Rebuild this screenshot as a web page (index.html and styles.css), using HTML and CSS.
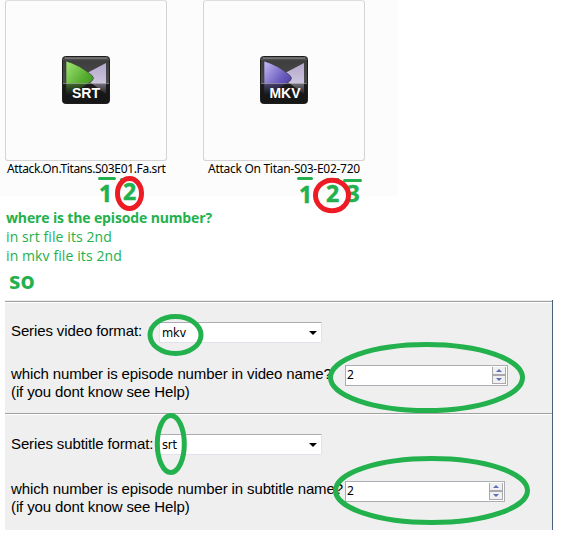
FILE: index.html
```html
<!DOCTYPE html>
<html lang="en">
<head>
<meta charset="utf-8">
<title>Episode number help</title>
<link rel="stylesheet" href="styles.css">
</head>
<body>
<main class="page">
  <section class="files">
    <figure class="file">
      <div class="thumb">
        <svg class="icon" viewBox="0 0 48 48">
          <defs>
            <linearGradient id="tile" x1="0" y1="0" x2="0" y2="1"><stop offset="0" stop-color="#626262"/><stop offset=".1" stop-color="#3e3e3e"/><stop offset=".55" stop-color="#4b4b4b"/><stop offset=".6" stop-color="#202020"/><stop offset="1" stop-color="#141414"/></linearGradient>
            <linearGradient id="green" x1="0" y1="0" x2="1" y2="1"><stop offset="0" stop-color="#a4e477"/><stop offset=".55" stop-color="#57ad30"/><stop offset="1" stop-color="#2c8512"/></linearGradient>
            <linearGradient id="violet" x1="0" y1="0" x2="1" y2="1"><stop offset="0" stop-color="#c5bdf5"/><stop offset=".55" stop-color="#6a5cbd"/><stop offset="1" stop-color="#3b2b99"/></linearGradient>
            <linearGradient id="lilac" x1="0" y1="0" x2="0" y2="1"><stop offset="0" stop-color="#b3a8cb"/><stop offset="1" stop-color="#dcd4e8"/></linearGradient>
            <linearGradient id="shade" x1="0" y1="0" x2="0" y2="1"><stop offset="0" stop-color="#181818" stop-opacity=".5"/><stop offset=".6" stop-color="#171717"/><stop offset="1" stop-color="#171717"/></linearGradient>
          </defs>
          <rect x=".5" y=".5" width="47" height="47" rx="3" fill="url(#tile)" stroke="#1d1d1d"/>
          <path d="M3 2.2H45" stroke="#858585"/>
          <path d="M44 7V38L25 24V17Z" fill="url(#lilac)"/>
          <path d="M4 5Q18 9 30 19.500Q33 22 30 25L4 42Z" fill="url(#green)" stroke="#333" stroke-width=".6"/>
          <path d="M1 27.500H47V44Q47 47 44 47H4Q1 47 1 44Z" fill="url(#shade)"/>
          <path d="M1 27.500H47" stroke="#aaa" stroke-opacity=".6"/>
          <text class="tag" x="24" y="42" textLength="28" lengthAdjust="spacingAndGlyphs">SRT</text>
        </svg>
      </div>
      <figcaption class="name name-srt">Attack.On.Titans.S03E01.Fa.srt</figcaption>
    </figure>
    <figure class="file">
      <div class="thumb">
        <svg class="icon" viewBox="0 0 48 48">
          <rect x=".5" y=".5" width="47" height="47" rx="3" fill="url(#tile)" stroke="#1d1d1d"/>
          <path d="M3 2.2H45" stroke="#858585"/>
          <path d="M44 7V38L25 24V17Z" fill="url(#lilac)"/>
          <path d="M4 5Q18 9 30 19.500Q33 22 30 25L4 42Z" fill="url(#violet)" stroke="#333" stroke-width=".6"/>
          <path d="M1 27.500H47V44Q47 47 44 47H4Q1 47 1 44Z" fill="url(#shade)"/>
          <path d="M1 27.500H47" stroke="#aaa" stroke-opacity=".6"/>
          <text class="tag" x="25" y="42" textLength="31" lengthAdjust="spacingAndGlyphs">MKV</text>
        </svg>
      </div>
      <figcaption class="name name-mkv">Attack On Titan-S03-E02-720</figcaption>
    </figure>
  </section>

  <section class="notes">
    <p class="question">where is the episode number?</p>
    <p class="answer">in srt file its 2nd</p>
    <p class="answer">in mkv file its 2nd</p>
    <p class="so">so</p>
  </section>

  <section class="form">
    <div class="group">
      <div class="row row-format">
        <span class="label">Series video format:</span>
        <div class="select"><span>mkv</span><i class="caret"></i></div>
      </div>
      <div class="row row-number">
        <p class="label">which number is episode number in video name?<br>(if you dont know see Help)</p>
        <div class="spinner"><span>2</span><div class="steps"><i class="step up"></i><i class="step down"></i></div></div>
      </div>
    </div>
    <div class="group group-subtitle">
      <div class="row row-format">
        <span class="label">Series subtitle format:</span>
        <div class="select"><span>srt</span><i class="caret"></i></div>
      </div>
      <div class="row row-number">
        <p class="label">which number is episode number in subtitle name?<br>(if you dont know see Help)</p>
        <div class="spinner"><span>2</span><div class="steps"><i class="step up"></i><i class="step down"></i></div></div>
      </div>
    </div>
  </section>

  <svg class="marks" viewBox="0 0 562 536">
    <g class="bars">
      <path d="M99.500 178.500H114.500M121.500 179.500H135M298.500 178.500H311.500M327.500 179.500H338M344.500 180.500H360.500"/>
    </g>
    <g class="digits">
      <text x="99" y="202">1</text><text x="123" y="200">2</text>
      <text x="299" y="203">1</text><text x="326" y="202">2</text><text x="346.500" y="202">3</text>
    </g>
    <g class="red">
      <ellipse cx="129.500" cy="193.500" rx="12" ry="15"/>
      <ellipse cx="332" cy="195.500" rx="16.500" ry="15.300"/>
    </g>
    <g class="green">
      <ellipse cx="175.500" cy="335" rx="25.500" ry="18.500"/>
      <ellipse cx="426.500" cy="377.500" rx="96" ry="33"/>
      <ellipse cx="170.800" cy="444" rx="13.500" ry="28.500"/>
      <ellipse cx="431.500" cy="490.500" rx="96" ry="32"/>
    </g>
  </svg>
</main>
</body>
</html>
```

FILE: styles.css
```css
* { box-sizing: border-box; }
body { margin: 0; background: #fff; }
p, figure { margin: 0; }

.page {
  position: relative;
  width: 562px;
  height: 536px;
  overflow: hidden;
  display: flex;
  flex-direction: column;
}

.files {
  display: flex;
  gap: 36px;
  width: 398px;
  height: 196px;
  padding-left: 5px;
  background: #fcfcfc;
}
.file { width: 162px; }
.thumb {
  display: flex;
  justify-content: center;
  width: 162px;
  height: 161px;
  padding: 55px 1px 0 0;
  border: 1px solid #d3d3d3;
  border-top-color: #dedede;
  border-radius: 3px;
}
.icon { width: 48px; height: 48px; flex: none; }
.tag {
  font: bold 14px "Liberation Sans", Arial, sans-serif;
  fill: #fff;
  text-anchor: middle;
}
.name {
  font: 12px/16px "Noto Sans", "Open Sans", sans-serif;
  color: #000;
  white-space: nowrap;
}
.name-srt { padding-left: 2px; letter-spacing: -.36px; }
.name-mkv { padding-left: 5px; letter-spacing: -.28px; }

.notes {
  height: 104px;
  padding: 12px 0 0 6px;
  font-family: "Open Sans", "Noto Sans", sans-serif;
  color: #22b14c;
  white-space: nowrap;
}
.question { font-size: 14px; line-height: 19px; font-weight: bold; letter-spacing: -.14px; }
.answer { font-size: 14px; line-height: 19px; letter-spacing: .1px; }
.so { font-size: 23px; line-height: 30px; font-weight: bold; padding-left: 3px; }

.form {
  width: 548px;
  height: 230px;
  margin-left: 5px;
  padding-top: 1px;
  border-right: 1px solid #4b6078;
  background: #efefef;
  font: 15px/18px "Liberation Sans", Arial, sans-serif;
  letter-spacing: -.12px;
  color: #000;
}
.group {
  height: 112px;
  padding: 20px 0 0 6px;
  border-top: 1px solid #a0a0a0;
  box-shadow: inset 0 1px #fff;
}
.row { display: flex; white-space: nowrap; }
.row-format { height: 43px; }
.row-format .label { width: 148px; }
.select {
  display: flex;
  justify-content: space-between;
  align-items: center;
  width: 163px;
  height: 21px;
  padding: 0 4px 0 2px;
  border: 1px solid #e2e3ea;
  border-top-color: #abadb3;
  background: #fff;
  font: 11.5px/16px "DejaVu Sans", sans-serif;
}
.caret {
  border: 4px solid transparent;
  border-top-color: #000;
  border-bottom: 0;
}
.row-number .label { width: 334px; }
.spinner {
  display: flex;
  justify-content: space-between;
  width: 163px;
  height: 21px;
  padding: 1px;
  border: 1px solid #abadb3;
  background: #fff;
  font: 12px/16px "Noto Sans", sans-serif;
}
.steps {
  display: grid;
  grid-template-rows: 7px 7px;
  gap: 2px;
  width: 14px;
  height: 17px;
  padding: 0 1px 1px;
  background: #a9a9ad;
}
.step { display: flex; justify-content: center; align-items: center; background: #f0f0f0; }
.step::before { content: ""; border: 3px solid transparent; }
.up::before { border-bottom-color: #5a6fb5; border-top: 0; }
.down::before { border-top-color: #5a6fb5; border-bottom: 0; }
.group-subtitle { height: 116px; }
.group-subtitle .row-format { height: 47px; }
.group-subtitle .row-format .label { padding-top: 1px; }
.group-subtitle .row-number .label { margin-top: -1px; }
.group-subtitle .spinner { width: 160px; }

.marks { position: absolute; inset: 0; width: 562px; height: 536px; }
.bars { stroke: #22b14c; stroke-width: 3; stroke-linecap: round; fill: none; }
.digits { font: bold 23px "Open Sans", "Noto Sans", sans-serif; fill: #22b14c; stroke: #22b14c; stroke-width: .5; }
.red { stroke: #ed1c24; stroke-width: 5; fill: none; }
.green { stroke: #22b14c; stroke-width: 5; fill: none; }
```
